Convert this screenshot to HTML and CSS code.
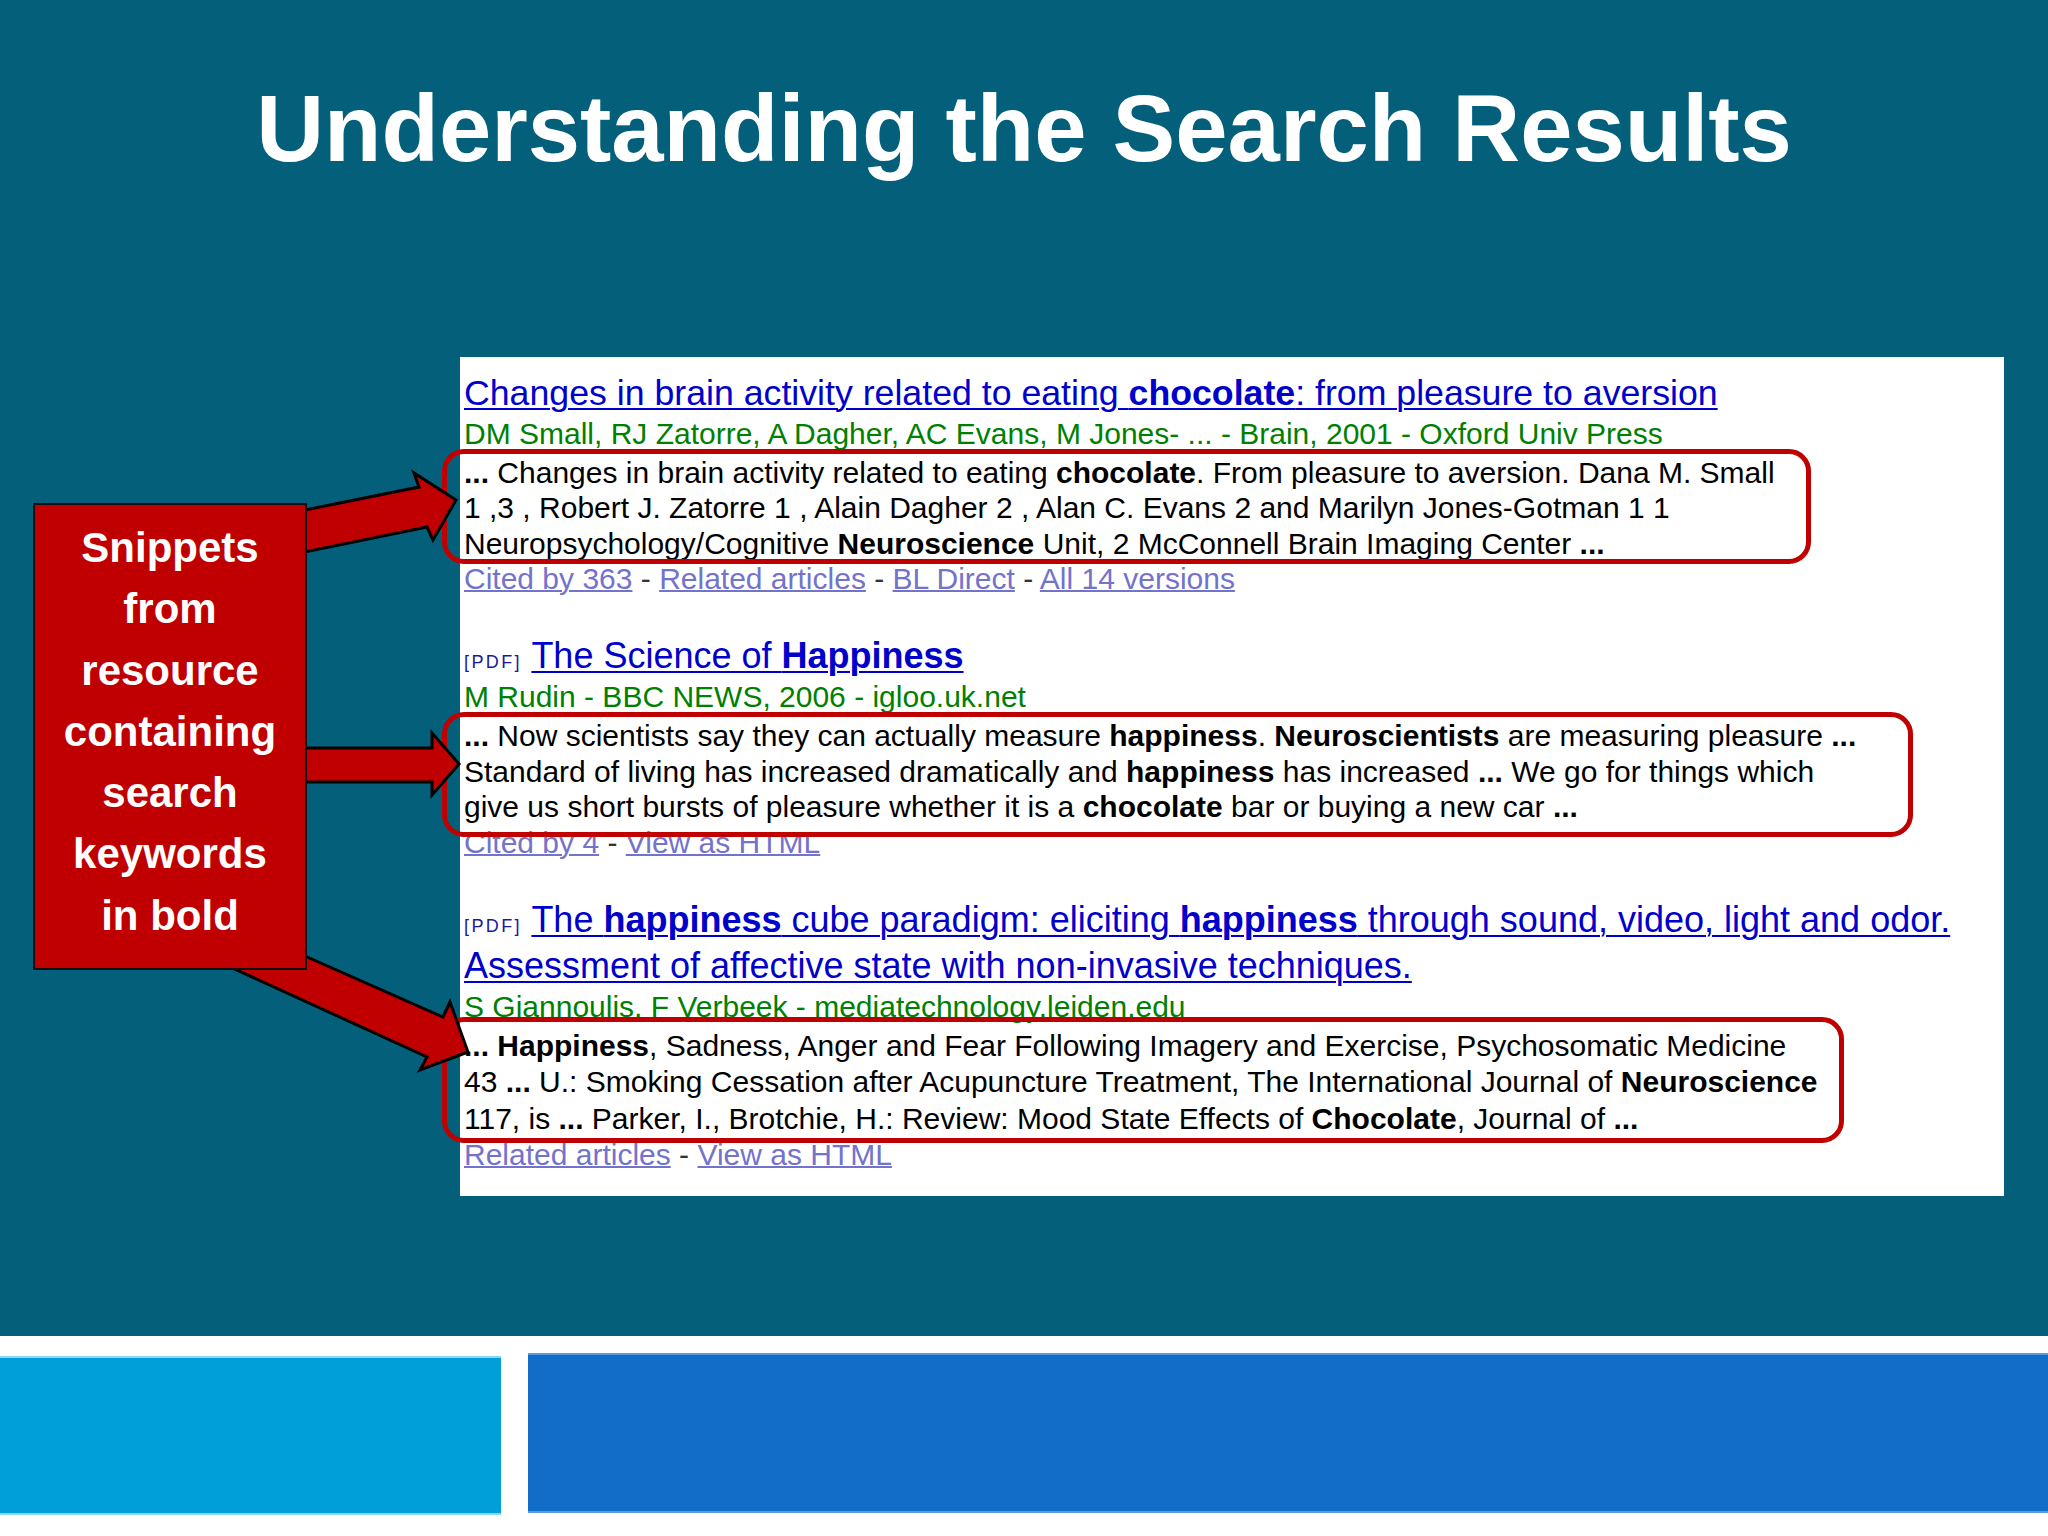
FILE: index.html
```html
<!DOCTYPE html>
<html>
<head>
<meta charset="utf-8">
<link rel="stylesheet" href="styles.css">
</head>
<body>
<div class="slide">
  <h1 class="slide-title">Understanding the Search Results</h1>
  <div class="panel">
    <div class="result">
      <div class="rtitle rtitle-first"><a class="tlink">Changes in brain activity related to eating <b>chocolate</b>: from pleasure to aversion</a></div>
      <div class="meta">DM Small, RJ Zatorre, A Dagher, AC Evans, M Jones- ... - Brain, 2001 - Oxford Univ Press</div>
      <div class="snip"><b>...</b> Changes in brain activity related to eating <b>chocolate</b>. From pleasure to aversion. Dana M. Small<br>1 ,3 , Robert J. Zatorre 1 , Alain Dagher 2 , Alan C. Evans 2 and Marilyn Jones-Gotman 1 1<br>Neuropsychology/Cognitive <b>Neuroscience</b> Unit, 2 McConnell Brain Imaging Center <b>...</b><span class="hl hl1"></span></div>
      <div class="links"><a>Cited by 363</a> - <a>Related articles</a> - <a>BL Direct</a> - <a>All 14 versions</a></div>
    </div>
    <div class="result">
      <div class="rtitle"><span class="pdf">[PDF]</span> <a class="tlink">The Science of <b>Happiness</b></a></div>
      <div class="meta">M Rudin - BBC NEWS, 2006 - igloo.uk.net</div>
      <div class="snip"><b>...</b> Now scientists say they can actually measure <b>happiness</b>. <b>Neuroscientists</b> are measuring pleasure <b>...</b><br>Standard of living has increased dramatically and <b>happiness</b> has increased <b>...</b> We go for things which<br>give us short bursts of pleasure whether it is a <b>chocolate</b> bar or buying a new car <b>...</b><span class="hl hl2"></span></div>
      <div class="links"><a>Cited by 4</a> - <a>View as HTML</a></div>
    </div>
    <div class="result">
      <div class="rtitle"><span class="pdf">[PDF]</span> <a class="tlink">The <b>happiness</b> cube paradigm: eliciting <b>happiness</b> through sound, video, light and odor.<br>Assessment of affective state with non-invasive techniques.</a></div>
      <div class="meta">S Giannoulis, F Verbeek - mediatechnology.leiden.edu</div>
      <div class="snip snip-last"><b>... Happiness</b>, Sadness, Anger and Fear Following Imagery and Exercise, Psychosomatic Medicine<br>43 <b>...</b> U.: Smoking Cessation after Acupuncture Treatment, The International Journal of <b>Neuroscience</b><br>117, is <b>...</b> Parker, I., Brotchie, H.: Review: Mood State Effects of <b>Chocolate</b>, Journal of <b>...</b><span class="hl hl3"></span></div>
      <div class="links"><a>Related articles</a> - <a>View as HTML</a></div>
    </div>
  </div>
</div>
<div class="footer">
  <div class="bar-light"></div>
  <div class="bar-dark"></div>
</div>

<svg class="arrows" width="2048" height="1536" viewBox="0 0 2048 1536">
  <polygon points="280,945 443,1017 450,1002 468,1052 420,1070 427,1057 215,960" />
  <polygon points="300,511 419,487 414,473 456,500 433,540 427,527 300,553" />
  <polygon points="300,748 432,748 432,733 459,764 432,795 432,782 300,782" />
</svg>
<div class="callout">Snippets<br>from<br>resource<br>containing<br>search<br>keywords<br>in bold</div>
</body>
</html>
```
FILE: styles.css
```css
html, body {
  margin: 0;
  padding: 0;
}
body {
  width: 2048px;
  height: 1536px;
  position: relative;
  overflow: hidden;
  background: #ffffff;
  font-family: "Liberation Sans", Arial, sans-serif;
}
.slide {
  height: 1336px;
  background: #04607a;
  padding-top: 82px;
  box-sizing: border-box;
}
.slide-title {
  margin: 0;
  text-align: center;
  color: #ffffff;
  font-size: 94px;
  line-height: 94px;
  font-weight: bold;
}
.panel {
  margin: 181px 0 0 460px;
  width: 1544px;
  height: 839px;
  box-sizing: border-box;
  background: #ffffff;
  padding: 12.5px 0 0 4px;
  white-space: nowrap;
}
.result + .result {
  margin-top: 36.5px;
}
.rtitle {
  font-size: 36px;
  line-height: 46px;
  color: #0000cc;
}
.rtitle-first .tlink {
  font-size: 35.7px;
}
.tlink {
  color: #0000cc;
  text-decoration: underline;
  text-decoration-thickness: 2px;
  text-underline-offset: 3px;
}
.pdf {
  font-size: 18px;
  line-height: 1;
  letter-spacing: 2.4px;
  color: #1a1a99;
}
.meta {
  font-size: 30px;
  line-height: 36px;
  color: #008000;
}
.snip {
  position: relative;
  margin-top: 3px;
  font-size: 30px;
  line-height: 35.5px;
  color: #000000;
}
.snip-last {
  line-height: 36.5px;
}
.links {
  font-size: 30px;
  line-height: 35.5px;
  color: #333333;
}
.links a {
  color: #7373cc;
  text-decoration: underline;
  text-decoration-thickness: 2px;
}
.hl {
  position: absolute;
  left: -22px;
  box-sizing: border-box;
  border: 5px solid #c00000;
  border-radius: 22px;
}
.hl1 {
  top: -5.5px;
  width: 1369px;
  height: 115px;
}
.hl2 {
  top: -6px;
  width: 1471px;
  height: 125px;
}
.hl3 {
  top: -10.5px;
  width: 1402px;
  height: 126px;
}
.footer {
  display: flex;
  align-items: flex-start;
  gap: 27px;
}
.bar-light {
  width: 501px;
  height: 159px;
  margin-top: 20px;
  box-sizing: border-box;
  background: #009fda;
  border-top: 2px solid #8fd6f2;
  border-bottom: 2px solid #8fd6f2;
}
.bar-dark {
  flex: 1;
  height: 160px;
  margin-top: 17px;
  box-sizing: border-box;
  background: #116dc7;
  border-top: 2px solid #5a9be0;
  border-bottom: 2px solid #5a9be0;
}
.arrows {
  position: absolute;
  left: 0;
  top: 0;
  pointer-events: none;
}
.arrows polygon {
  fill: #c00000;
  stroke: #000000;
  stroke-width: 3;
  stroke-linejoin: miter;
}
.callout {
  position: absolute;
  left: 33px;
  top: 503px;
  width: 274px;
  height: 467px;
  box-sizing: border-box;
  padding-top: 12px;
  background: #c00000;
  border: 2px solid #111111;
  color: #ffffff;
  text-align: center;
  font-size: 42px;
  line-height: 61.3px;
  font-weight: bold;
}
```
